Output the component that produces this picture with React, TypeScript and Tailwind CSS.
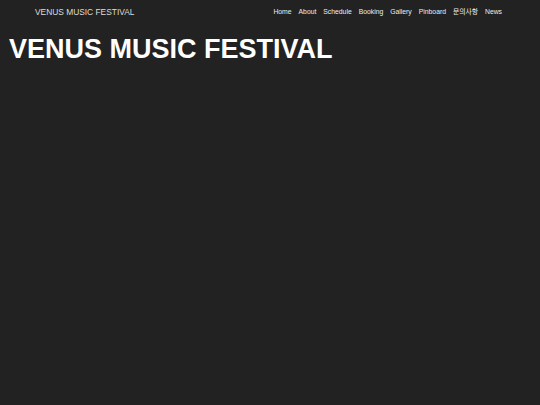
export default function App() {
  const links = ['Home', 'About', 'Schedule', 'Booking', 'Gallery', 'Pinboard', '문의사항', 'News'];
  return (
    <div className="min-h-[405px] w-full bg-[#222222] font-['Liberation_Sans','Noto_Sans_CJK_KR',sans-serif]">
      <nav className="flex h-[24px] items-center justify-between pl-[35px] pr-[38px]">
        <span className="text-[8.4px] leading-none text-[#dddddd]">VENUS MUSIC FESTIVAL</span>
        <ul className="flex items-center gap-[7px] text-[6.8px] leading-none text-[#eeeeee]">
          {links.map((l) => (
            <li key={l}>{l}</li>
          ))}
        </ul>
      </nav>
      <h1 className="mt-[10px] pl-[9px] text-[27px] font-bold leading-[31px] text-white">
        VENUS MUSIC FESTIVAL
      </h1>
    </div>
  );
}
